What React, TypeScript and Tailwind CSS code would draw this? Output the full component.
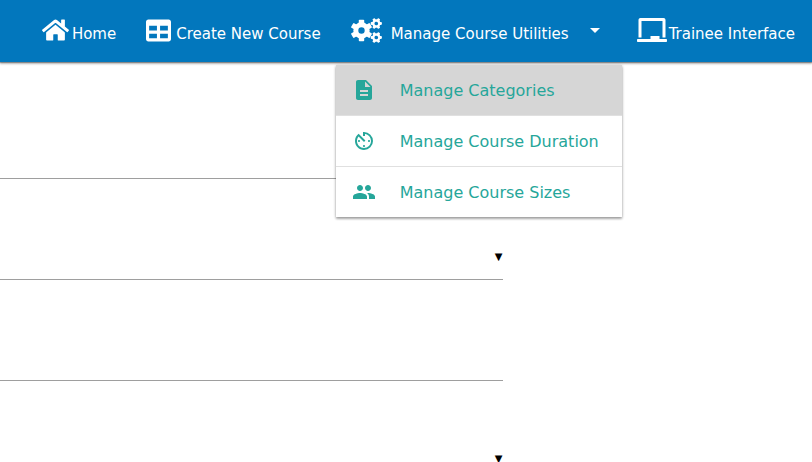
import { FaChalkboard, FaTable } from "react-icons/fa";
import { MdArrowDropDown, MdAvTimer, MdDescription, MdPeople } from "react-icons/md";

const utilities = [
  { label: "Manage Categories", Icon: MdDescription, row: "bg-[#d6d6d6]" },
  { label: "Manage Course Duration", Icon: MdAvTimer, row: "bg-white border-t border-[#e0e0e0]" },
  { label: "Manage Course Sizes", Icon: MdPeople, row: "bg-white border-t border-[#e0e0e0]" },
];

const navItem = "flex h-full items-center px-[15px] pb-0.5";
const navLabel = "pt-2";

function HomeIcon() {
  return (
    <svg viewBox="0 0 576 512" fill="currentColor" aria-hidden="true" className="h-6 w-[27px]">
      <path d="M488 312.7V456c0 13.3-10.7 24-24 24H348c-6.6 0-12-5.4-12-12V356c0-6.600-5.400-12-12-12h-72c-6.600 0-12 5.400-12 12v112c0 6.600-5.400 12-12 12H112c-13.300 0-24-10.700-24-24V312.700c0-3.600 1.600-7 4.400-9.300l188-154.800c4.400-3.600 10.800-3.600 15.300 0l188 154.800c2.700 2.300 4.300 5.700 4.300 9.300z" />
      <path d="M571.6 251.8L488 182.900V44.400c0-6.600-5.400-12-12-12h-56c-6.600 0-12 5.400-12 12V117l-89.500-73.700c-17.700-14.600-43.300-14.600-61 0L4.400 251.800c-5.100 4.200-5.800 11.800-1.600 16.900l25.500 31c4.200 5.100 11.800 5.800 16.900 1.600l235.200-193.700c4.400-3.600 10.800-3.600 15.300 0l235.200 193.700c5.100 4.200 12.700 3.500 16.900-1.600l25.500-31c4.200-5.200 3.400-12.700-1.700-16.900z" />
    </svg>
  );
}

function Gear({ cx, cy, hole, body, tip, tooth, turn }: { cx: number; cy: number; hole: number; body: number; tip: number; tooth: number; turn: number }) {
  return (
    <g transform={`translate(${cx} ${cy}) rotate(${turn})`}>
      <circle r={(hole + body) / 2} fill="none" stroke="currentColor" strokeWidth={body - hole} />
      {[0, 60, 120, 180, 240, 300].map((angle) => (
        <rect key={angle} x={-tooth / 2} y={-tip} width={tooth} height={tip - hole - 1} rx={0.8} transform={`rotate(${angle})`} />
      ))}
    </g>
  );
}

function GearsIcon() {
  return (
    <svg viewBox="0 0 31 25" fill="currentColor" aria-hidden="true" className="h-[25px] w-[31px]">
      <Gear cx={10.5} cy={12.5} hole={3.2} body={8.2} tip={10.8} tooth={5.4} turn={0} />
      <Gear cx={25.3} cy={5.5} hole={1.8} body={4.2} tip={5.6} tooth={2.8} turn={30} />
      <Gear cx={25.3} cy={19.5} hole={1.8} body={4.2} tip={5.6} tooth={2.8} turn={30} />
    </svg>
  );
}

function NavBar() {
  return (
    <nav className="relative z-10 flex h-[62px] justify-end whitespace-nowrap bg-[#0277bd] pr-0.5 text-[15px] leading-6 text-white shadow-[0_2px_2px_0_rgba(0,0,0,0.25),0_1px_1px_0_rgba(0,0,0,0.3)]">
      <a href="#home" className={navItem}>
        <HomeIcon />
        <span className={`${navLabel} ml-[3px]`}>Home</span>
      </a>
      <a href="#create" className={navItem}>
        <FaTable className="h-[25px] w-[25px]" />
        <span className={`${navLabel} ml-[5px]`}>Create New Course</span>
      </a>
      <div className="relative">
        <button type="button" aria-expanded="true" className={navItem}>
          <GearsIcon />
          <span className={`${navLabel} ml-[9px]`}>Manage Course Utilities</span>
          <MdArrowDropDown className="ml-[14px] size-6" />
        </button>
        <ul className="absolute left-0 top-[65px] w-full bg-white text-base text-[#26a69a] shadow-[0_2px_2px_0_rgba(0,0,0,0.2),0_1px_3px_0_rgba(0,0,0,0.3)]">
          {utilities.map(({ label, Icon, row }) => (
            <li key={label} className={row}>
              <a href="#utilities" className="flex h-[50px] items-center gap-6 px-4">
                <Icon className="size-6 shrink-0" />
                <span className="pt-0.5">{label}</span>
              </a>
            </li>
          ))}
        </ul>
      </div>
      <a href="#trainee" className={navItem}>
        <FaChalkboard className="h-6 w-[30px]" />
        <span className={`${navLabel} ml-0.5`}>Trainee Interface</span>
      </a>
    </nav>
  );
}

const control = "block h-[46px] w-full appearance-none border-b border-[#9e9e9e] bg-transparent outline-none";

function TextField({ label }: { label: string }) {
  return <input type="text" aria-label={label} className={control} />;
}

function SelectField({ label }: { label: string }) {
  return (
    <div className="relative">
      <select aria-label={label} className={control} />
      <span className="pointer-events-none absolute inset-y-0 right-0 flex items-center pr-px text-[10px] leading-3 text-black">▼</span>
    </div>
  );
}

export default function App() {
  return (
    <div className="h-screen overflow-hidden bg-white font-['DejaVu_Sans',Verdana,sans-serif]">
      <NavBar />
      <form className="flex w-[62%] flex-col gap-[55px] pt-[71px]">
        <TextField label="Course name" />
        <SelectField label="Category" />
        <TextField label="Course code" />
        <SelectField label="Duration" />
      </form>
    </div>
  );
}
